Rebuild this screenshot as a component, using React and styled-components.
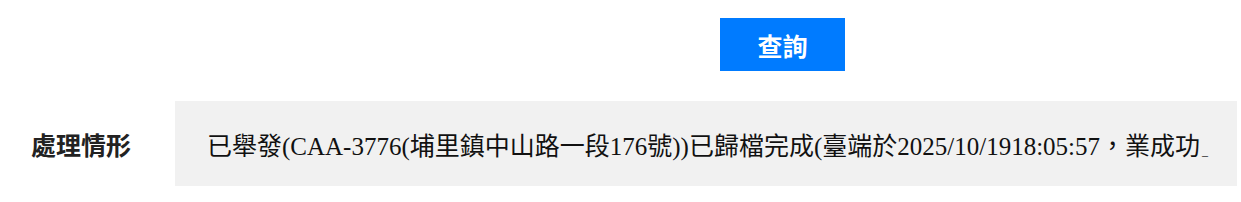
import styled, { createGlobalStyle } from "styled-components";

const GlobalStyle = createGlobalStyle`
  html, body {
    margin: 0;
    padding: 0;
    background: #ffffff;
  }
  body {
    font-family: "Liberation Serif", "Noto Sans CJK TC", serif;
    color: #111111;
  }
`;

const Page = styled.div`
  width: 1241px;
  height: 202px;
  display: flex;
  flex-direction: column;
  overflow: hidden;
`;

const Toolbar = styled.div`
  display: flex;
  align-items: flex-start;
  padding: 18px 0 0 720px;
  height: 101px;
  box-sizing: border-box;
  flex-shrink: 0;
`;

const Button = styled.button`
  width: 125px;
  height: 53px;
  border: none;
  background-color: #007bff;
  color: #ffffff;
  font-family: "Noto Sans CJK TC", sans-serif;
  font-weight: 700;
  font-size: 25px;
  cursor: pointer;
  padding: 0;
`;

const Row = styled.div`
  display: flex;
  height: 85px;
  margin-right: 4px;
  flex-shrink: 0;
`;

const Label = styled.div`
  width: 175px;
  box-sizing: border-box;
  padding-left: 31px;
  display: flex;
  align-items: center;
  font-family: "Noto Sans CJK TC", sans-serif;
  font-weight: 700;
  font-size: 25px;
  color: #222222;
`;

const Value = styled.div`
  flex: 1;
  background: #f1f1f1;
  display: flex;
  align-items: center;
  padding-left: 32px;
  font-family: "Liberation Serif", "Noto Sans CJK TC", serif;
  font-size: 25px;
  color: #111111;
  white-space: nowrap;
  overflow: hidden;
`;

const Tail = styled.span`
  font-size: 12px;
  margin-left: 2px;
`;

const App = () => {
  return (
    <Page>
      <GlobalStyle />
      <Toolbar>
        <Button>查詢</Button>
      </Toolbar>
      <Row>
        <Label>處理情形</Label>
        <Value>
          <span>
            已舉發(CAA-3776(埔里鎮中山路一段176號))已歸檔完成(臺端於2025/10/1918:05:57，業成功
            <Tail>_</Tail>
          </span>
        </Value>
      </Row>
    </Page>
  );
};

export default App;
